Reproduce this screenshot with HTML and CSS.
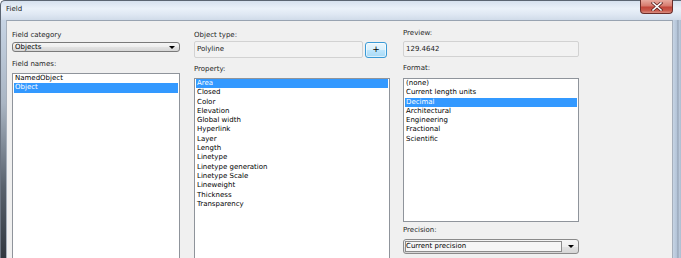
FILE: index.html
```html
<!DOCTYPE html>
<html lang="en">
<head>
    <meta charset="UTF-8">
    <title>Field</title>
    <link rel="stylesheet" href="styles.css">
</head>
<body>
    <div class="window">
        <div class="titlebar">
            <span class="title">Field</span>
            <div class="close">
                <svg width="12" height="9" viewBox="0 0 12 9">
                    <path d="M2 1 L10 8 M10 1 L2 8" stroke="#5a2320" stroke-width="3" stroke-linecap="square"/>
                    <path d="M2 1 L10 8 M10 1 L2 8" stroke="#ffffff" stroke-width="1.6" stroke-linecap="square"/>
                </svg>
            </div>
        </div>
        <div class="frame">
            <div class="frame-left"></div>
            <div class="content">
                <div class="col col-left">
                    <div class="label">Field category</div>
                    <div class="combo">
                        <span>Objects</span>
                        <span class="arrow"></span>
                    </div>
                    <div class="label label-gap">Field names:</div>
                    <div class="list">
                        <div class="item">NamedObject</div>
                        <div class="item selected">Object</div>
                    </div>
                </div>
                <div class="col col-mid">
                    <div class="label">Object type:</div>
                    <div class="type-row">
                        <div class="field">Polyline</div>
                        <div class="plus-btn">+</div>
                    </div>
                    <div class="label label-gap-mid">Property:</div>
                    <div class="list">
                        <div class="item selected">Area</div>
                        <div class="item">Closed</div>
                        <div class="item">Color</div>
                        <div class="item">Elevation</div>
                        <div class="item">Global width</div>
                        <div class="item">Hyperlink</div>
                        <div class="item">Layer</div>
                        <div class="item">Length</div>
                        <div class="item">Linetype</div>
                        <div class="item">Linetype generation</div>
                        <div class="item">Linetype Scale</div>
                        <div class="item">Lineweight</div>
                        <div class="item">Thickness</div>
                        <div class="item">Transparency</div>
                    </div>
                </div>
                <div class="col col-right">
                    <div class="label">Preview:</div>
                    <div class="field preview">129.4642</div>
                    <div class="label label-gap-mid">Format:</div>
                    <div class="list list-format">
                        <div class="item">(none)</div>
                        <div class="item">Current length units</div>
                        <div class="item selected">Decimal</div>
                        <div class="item">Architectural</div>
                        <div class="item">Engineering</div>
                        <div class="item">Fractional</div>
                        <div class="item">Scientific</div>
                    </div>
                    <div class="label label-precision">Precision:</div>
                    <div class="combo combo-precision">
                        <span class="combo-value">Current precision</span>
                        <span class="arrow"></span>
                    </div>
                </div>
            </div>
            <div class="frame-right"></div>
        </div>
    </div>
</body>
</html>
```

FILE: styles.css
```css
body {
    margin: 0;
    font-family: "DejaVu Sans", Verdana, sans-serif;
    font-size: 7px;
    color: #000;
    background: #fff;
}
.window {
    width: 681px;
    height: 258px;
    overflow: hidden;
    display: flex;
    flex-direction: column;
}
.titlebar {
    height: 20px;
    flex: none;
    box-sizing: border-box;
    display: flex;
    justify-content: space-between;
    align-items: flex-start;
    border-top: 1px solid #5b6572;
    border-left: 1px solid #5b6572;
    border-radius: 5px 0 0 0;
    background: linear-gradient(to bottom, #d6e1ee 0%, #eaf1f9 40%, #dfe8f3 70%, #d0dbe9 100%);
}
.title {
    padding: 3px 0 0 5px;
    line-height: 10px;
    color: #1b1b1b;
}
.close {
    width: 33px;
    height: 14px;
    margin: -1px 8px 0 0;
    box-sizing: border-box;
    border: 1px solid #6b2d29;
    border-top: none;
    border-radius: 0 0 4px 4px;
    background: linear-gradient(to bottom, #e8aa9f 0%, #d77b6e 45%, #c2463a 55%, #c95a4c 80%, #d98d80 100%);
    display: flex;
    align-items: center;
    justify-content: center;
}
.frame {
    flex: 1;
    display: flex;
    min-height: 0;
}
.frame-left {
    width: 6px;
    flex: none;
    box-sizing: border-box;
    border-left: 1px solid #6a7380;
    background: linear-gradient(to bottom, #c7d4e4 0%, #a9b5c3 35%, #59626d 70%, #30373f 100%);
}
.frame-right {
    width: 8px;
    flex: none;
    background: linear-gradient(to right, #c6d4e4 0, #b3c3d7 4px, #8e9cae 5px, #bccbdd 6px, #aebdd0 100%);
}
.content {
    flex: 1;
    display: flex;
    background: #f0f0f0;
    border-top: 1px solid #98a3b1;
    border-left: 1px solid #a6afbb;
    border-right: 1px solid #a6afbb;
    padding-left: 5px;
}
.col {
    display: flex;
    flex-direction: column;
    padding-top: 9px;
}
.col-left {
    width: 168px;
}
.col-mid {
    width: 196px;
    margin-left: 14px;
}
.col-right {
    width: 176px;
    margin-left: 13px;
    padding-top: 7px;
}
.label {
    line-height: 10px;
    color: #1e1e1e;
    white-space: nowrap;
}
.label-gap {
    margin-top: 7px;
}
.label-gap-mid {
    margin-top: 6px;
}
.label-precision {
    margin-top: 3px;
}
.combo {
    margin-top: 2px;
    height: 15px;
    box-sizing: border-box;
    border: 1px solid #7a7a7a;
    border-radius: 3px;
    background: linear-gradient(to bottom, #f5f5f5 0%, #eeeeee 50%, #e3e3e3 51%, #d6d6d6 100%);
    display: flex;
    align-items: center;
    justify-content: space-between;
    padding: 0 4px 0 2px;
}
.arrow {
    width: 0;
    height: 0;
    border-left: 3px solid transparent;
    border-right: 3px solid transparent;
    border-top: 3px solid #000;
}
.combo-precision {
    margin-top: 4px;
    padding: 0 4px 0 1px;
    border-color: #8a8a8a;
}
.combo-value {
    flex: 1;
    height: 11px;
    line-height: 9px;
    box-sizing: border-box;
    border: 1px solid #8c8c8c;
    background: #f6f6f6;
    margin-right: 6px;
}
.type-row {
    margin-top: 1px;
    display: flex;
    align-items: center;
    gap: 2px;
}
.field {
    width: 169px;
    height: 17px;
    box-sizing: border-box;
    border: 1px solid #d2d2d2;
    border-radius: 2px;
    background: #f2f2f2;
    padding-left: 2px;
    line-height: 15px;
    color: #1a1a1a;
}
.preview {
    width: 176px;
    height: 16px;
    line-height: 14px;
    margin-top: 3px;
}
.plus-btn {
    width: 22px;
    height: 16px;
    box-sizing: border-box;
    border: 1px solid #3a9ad6;
    border-radius: 3px;
    background: linear-gradient(to bottom, #eaf6fd 0%, #d9f0fc 50%, #bee6fd 51%, #a7d9f5 100%);
    box-shadow: inset 0 0 0 1px rgba(255, 255, 255, 0.6);
    text-align: center;
    line-height: 13px;
    font-size: 9px;
}
.list {
    margin-top: 4px;
    height: 190px;
    flex: none;
    box-sizing: border-box;
    border: 1px solid #8f949b;
    background: #fff;
    padding: 0 1px;
}
.list-format {
    margin-top: 5px;
    height: 144px;
}
.item {
    line-height: 9.3px;
    padding-left: 1px;
    white-space: nowrap;
}
.item.selected {
    background: #3399ff;
    color: #fff;
}
```
